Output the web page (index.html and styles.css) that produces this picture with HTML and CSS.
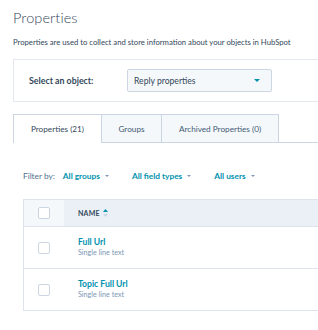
FILE: index.html
```html
<!DOCTYPE html>
<html>
  <head>
    <meta charset="UTF-8" />
    <title>Properties</title>
    <link rel="stylesheet" href="styles.css">
  </head>
  <body>
    <div class="page">
      <h1 class="title">Properties</h1>
      <p class="intro">Properties are used to collect and store information about your objects in HubSpot</p>

      <div class="object-card">
        <span class="object-label">Select an object:</span>
        <div class="select">
          <span>Reply properties</span>
          <span class="select-caret"></span>
        </div>
      </div>

      <div class="tabs">
        <div class="tab active">Properties (21)</div>
        <div class="tab">Groups</div>
        <div class="tab">Archived Properties (0)</div>
        <div class="tab-rest"></div>
      </div>

      <div class="filters">
        <span class="filter-label">Filter by:</span>
        <span class="filter">All groups <span class="caret"></span></span>
        <span class="filter">All field types <span class="caret"></span></span>
        <span class="filter">All users <span class="caret"></span></span>
      </div>

      <div class="table">
        <div class="row head">
          <div class="check-cell"><span class="checkbox"></span></div>
          <div class="name-cell">
            NAME
            <svg class="sort" width="5" height="10" viewBox="0 0 5 10">
              <path d="M0 4 L2.5 1 L5 4 Z" fill="#0091ae" />
              <path d="M0 6 L2.5 9 L5 6 Z" fill="#cbd6e2" />
            </svg>
          </div>
        </div>
        <div class="row">
          <div class="check-cell"><span class="checkbox"></span></div>
          <div class="name-cell">
            <div class="prop-name">Full Url</div>
            <div class="prop-type">Single line text</div>
          </div>
        </div>
        <div class="row">
          <div class="check-cell"><span class="checkbox"></span></div>
          <div class="name-cell">
            <div class="prop-name">Topic Full Url</div>
            <div class="prop-type">Single line text</div>
          </div>
        </div>
      </div>
    </div>
  </body>
</html>
```

FILE: styles.css
```css
body {
  margin: 0;
  width: 318px;
  height: 330px;
  overflow: hidden;
  background: #fff;
  font-family: Lato, "Open Sans", sans-serif;
  color: #33475b;
}
.page {
  padding: 8px 0 0 13px;
  width: 305px;
  overflow: hidden;
}
.title {
  margin: 0;
  font-size: 14.5px;
  font-weight: 300;
  line-height: 20px;
  letter-spacing: 0.1px;
}
.intro {
  margin: 8px 0 0;
  font-size: 7.7px;
  line-height: 12px;
  white-space: nowrap;
  overflow: hidden;
}
.object-card {
  margin-top: 11px;
  height: 41px;
  border: 1px solid #e4e9f0;
  border-right: none;
  display: flex;
  align-items: center;
  padding-left: 15px;
}
.object-label {
  font-size: 8.8px;
  font-weight: 700;
  width: 98px;
}
.select {
  width: 145px;
  height: 23px;
  background: #f5f8fa;
  border: 1px solid #cbd6e2;
  border-radius: 2px;
  display: flex;
  align-items: center;
  justify-content: space-between;
  padding: 0 11px 0 6px;
  box-sizing: border-box;
  font-size: 8.6px;
}
.select-caret {
  width: 0;
  height: 0;
  border-left: 3px solid transparent;
  border-right: 3px solid transparent;
  border-top: 3px solid #0091ae;
}
.tabs {
  margin-top: 12px;
  display: flex;
  height: 29px;
}
.tab {
  display: flex;
  align-items: center;
  justify-content: center;
  font-size: 8.2px;
  color: #425b76;
  background: #f5f8fa;
  border: 1px solid #cbd6e2;
  border-left: none;
  box-sizing: border-box;
}
.tab:nth-child(1) { width: 89px; }
.tab:nth-child(2) { width: 60px; }
.tab:nth-child(3) { width: 117px; }
.tab.active {
  background: #fff;
  border-left: 1px solid #cbd6e2;
  border-bottom: none;
  color: #33475b;
}
.tab-rest {
  flex: 1;
  border-bottom: 1px solid #cbd6e2;
}
.filters {
  margin-top: 27px;
  padding-left: 10px;
  display: flex;
  align-items: center;
  font-size: 8.3px;
  height: 12px;
}
.filter-label {
  color: #516f90;
  margin-right: 8px;
}
.filter {
  color: #0091ae;
  font-weight: 700;
  margin-right: 23px;
  display: flex;
  align-items: center;
}
.caret {
  margin-left: 5px;
  width: 0;
  height: 0;
  border-left: 2px solid transparent;
  border-right: 2px solid transparent;
  border-top: 2px solid #7c98b6;
}
.table {
  margin: 17px 0 0 10px;
  border: 1px solid #dfe3eb;
  border-right: none;
}
.row {
  display: flex;
  height: 41px;
  border-top: 1px solid #dfe3eb;
}
.row.head {
  height: 26px;
  border-top: none;
  background: #eaf0f6;
}
.check-cell {
  width: 40px;
  display: flex;
  align-items: center;
  justify-content: center;
}
.head .check-cell {
  background: #f5f8fa;
}
.checkbox {
  width: 10px;
  height: 10px;
  border: 1px solid #cbd6e2;
  border-radius: 2px;
  background: #fff;
}
.name-cell {
  padding-left: 14px;
  display: flex;
  flex-direction: column;
  justify-content: center;
}
.head .name-cell {
  flex-direction: row;
  align-items: center;
  font-size: 7px;
  font-weight: 700;
  letter-spacing: 0.2px;
}
.sort {
  margin-left: 3px;
}
.prop-name {
  font-size: 8.6px;
  font-weight: 700;
  color: #0091ae;
  line-height: 11px;
}
.prop-type {
  font-size: 7.2px;
  color: #7c98b6;
  line-height: 10px;
}
```
